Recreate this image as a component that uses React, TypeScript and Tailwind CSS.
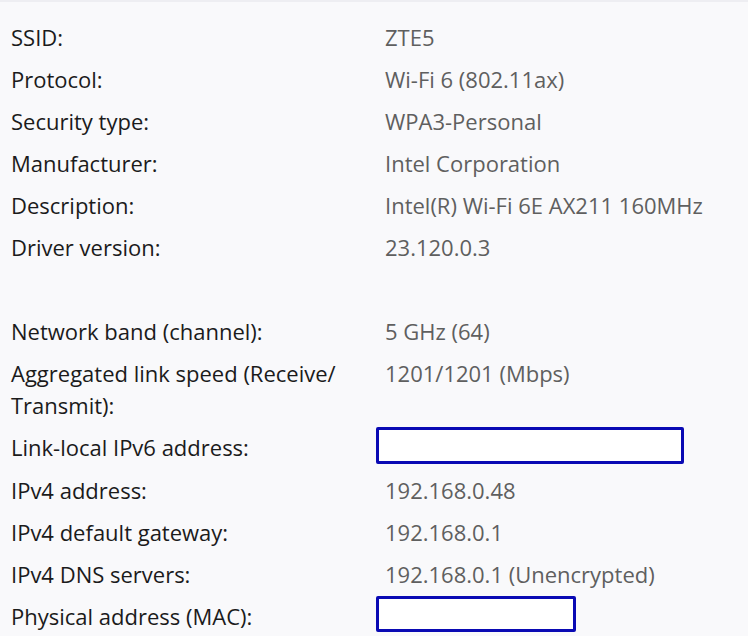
import React from "react";

type Row = { label: string; value?: string; redacted?: "wide" | "narrow" };

const top: Row[] = [
  { label: "SSID:", value: "ZTE5" },
  { label: "Protocol:", value: "Wi-Fi 6 (802.11ax)" },
  { label: "Security type:", value: "WPA3-Personal" },
  { label: "Manufacturer:", value: "Intel Corporation" },
  { label: "Description:", value: "Intel(R) Wi-Fi 6E AX211 160MHz" },
  { label: "Driver version:", value: "23.120.0.3" },
];

const bottom: Row[] = [
  { label: "Network band (channel):", value: "5 GHz (64)" },
  { label: "Aggregated link speed (Receive/ Transmit):", value: "1201/1201 (Mbps)" },
  { label: "Link-local IPv6 address:", redacted: "wide" },
  { label: "IPv4 address:", value: "192.168.0.48" },
  { label: "IPv4 default gateway:", value: "192.168.0.1" },
  { label: "IPv4 DNS servers:", value: "192.168.0.1 (Unencrypted)" },
  { label: "Physical address (MAC):", redacted: "narrow" },
];

function PropRow({ row }: { row: Row }) {
  return (
    <div className="grid grid-cols-[374px_1fr] leading-[32px]">
      <div className="pr-6 text-[#1b1b1b]">{row.label}</div>
      <div className="text-[#5f5f5f]">
        {row.redacted === "wide" && (
          <div className="-ml-[9px] -mt-[4px] h-[37px] w-[308px] rounded-[2px] border-[3px] border-[#0a0ab4] bg-white" />
        )}
        {row.redacted === "narrow" && (
          <div className="-ml-[9px] -mt-[4px] h-[36px] w-[200px] rounded-[2px] border-[3px] border-[#0a0ab4] bg-white" />
        )}
        {!row.redacted && row.value}
      </div>
    </div>
  );
}

export default function App() {
  return (
    <div
      className="h-[636px] w-[748px] overflow-hidden border-t-2 border-[#eeeef2] bg-[#f9f9fb] pl-[11px] pt-[19px] text-[22px]"
      style={{ fontFamily: '"Open Sans", "Noto Sans", sans-serif' }}
    >
      <div className="flex flex-col gap-[10px]">
        {top.map((r) => (
          <PropRow key={r.label} row={r} />
        ))}
        <div className="h-[32px]" />
        {bottom.map((r) => (
          <PropRow key={r.label} row={r} />
        ))}
      </div>
    </div>
  );
}
